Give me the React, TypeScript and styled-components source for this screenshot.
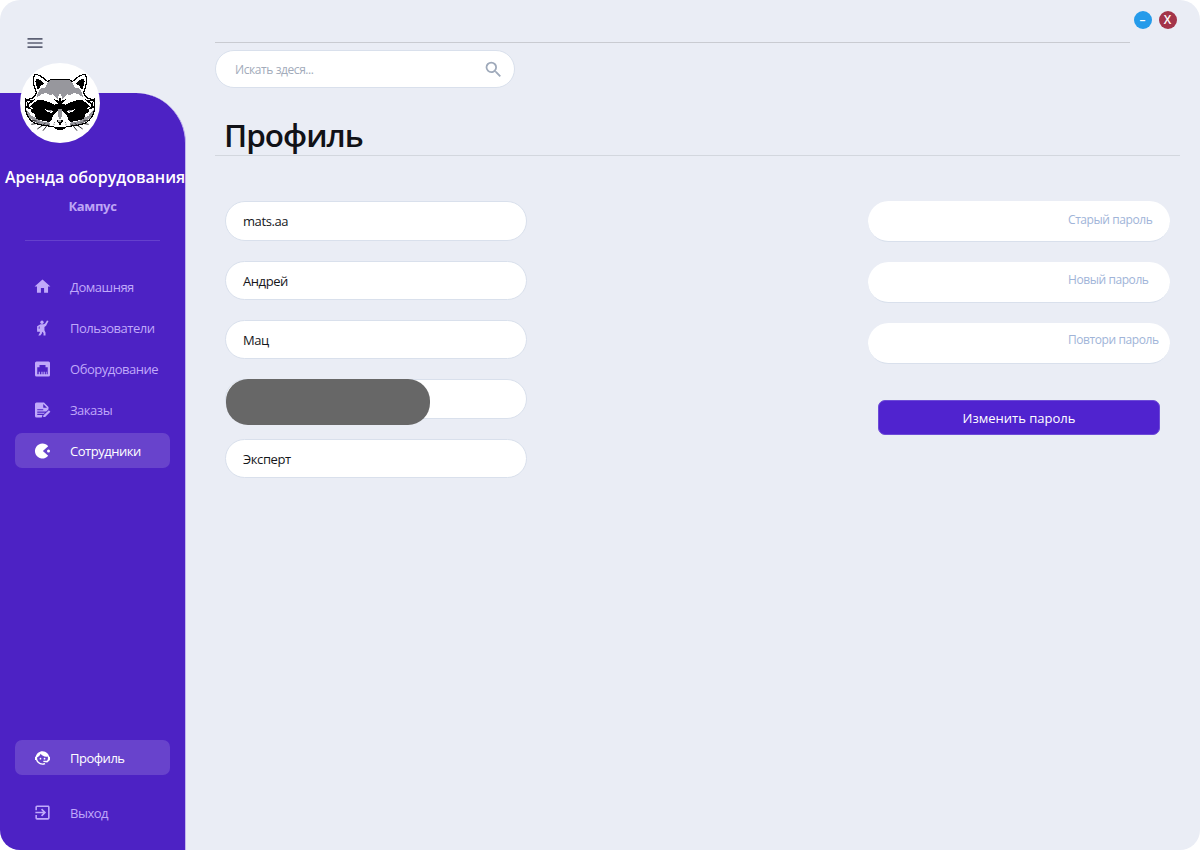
import React from 'react';
import styled, { createGlobalStyle } from 'styled-components';
import { MdHome, MdExitToApp, MdSearch, MdMenu } from 'react-icons/md';

const GlobalStyle = createGlobalStyle`
  * { box-sizing: border-box; }
  body { margin: 0; background: #fff; font-family: "Open Sans", "Noto Sans", sans-serif; }
  button, input { font-family: inherit; }
`;

const Window = styled.div`
  display: flex;
  width: 1200px;
  height: 850px;
  overflow: hidden;
  border-radius: 20px;
  background: #eaedf5;
`;

const Side = styled.aside`
  display: flex;
  flex-direction: column;
  width: 186px;
  padding-top: 33px;
`;

const MenuButton = styled.button`
  display: flex;
  width: 20px;
  height: 20px;
  margin-left: 25px;
  padding: 0;
  border: 0;
  background: none;
  color: #5c6074;
`;

const Panel = styled.nav`
  flex: 1;
  display: flex;
  flex-direction: column;
  margin-top: 40px;
  border-right: 1px solid #c2b5ee;
  border-top-right-radius: 50px;
  background: #4d22c4;
`;

const Avatar = styled.div`
  width: 80px;
  height: 80px;
  margin: -30px 0 0 20px;
  border-radius: 50%;
  overflow: hidden;
  background: #fff;
  flex: none;
  svg { display: block; }
`;

const Company = styled.div`
  margin: 23px 0 0 5px;
  height: 22px;
  line-height: 22px;
  font-size: 16px;
  font-weight: 600;
  white-space: nowrap;
  color: #fff;
`;

const Campus = styled.div`
  margin-top: 8px;
  height: 20px;
  line-height: 20px;
  font-size: 13px;
  font-weight: 700;
  letter-spacing: -0.35px;
  text-align: center;
  color: #bda5f5;
`;

const Divider = styled.div`
  height: 1px;
  margin: 24px 25px 28px;
  background: #6540cd;
`;

const NavList = styled.div`
  display: flex;
  flex-direction: column;
  gap: 6px;
  padding-left: 15px;
`;

const BottomNav = styled(NavList)`
  margin-top: auto;
  gap: 20px;
  padding-bottom: 20px;
`;

const NavItem = styled.a<{ $active?: boolean }>`
  display: flex;
  align-items: center;
  width: 155px;
  height: 35px;
  padding-left: 18px;
  gap: 18px;
  border-radius: 7px;
  font-size: 13px;
  white-space: nowrap;
  letter-spacing: -0.48px;
  color: ${p => (p.$active ? '#fff' : '#c0a9fa')};
  background: ${p => (p.$active ? '#6843cc' : 'transparent')};
  svg { flex: none; }
`;

const Main = styled.main`
  flex: 1;
  padding: 11px 20px 0 29px;
`;

const WindowButtons = styled.div`
  display: flex;
  justify-content: flex-end;
  gap: 7px;
  margin-right: 3.5px;
`;

const WindowButton = styled.button<{ $color: string }>`
  display: flex;
  align-items: center;
  justify-content: center;
  width: 18px;
  height: 18px;
  padding: 0;
  border: 0;
  border-radius: 50%;
  font-size: 12px;
  font-weight: 600;
  line-height: 18px;
  color: #fff;
  background: ${p => p.$color};
`;

const TopRule = styled.div`
  height: 1px;
  margin: 13px 50px 7px 0;
  background: #c9cbd1;
`;

const Search = styled.label`
  display: flex;
  align-items: center;
  width: 300px;
  height: 38px;
  padding: 0 10.5px 0 19px;
  border: 1px solid #d9e0ec;
  border-radius: 19px;
  background: #fff;
  color: #9ea9ba;
`;

const SearchInput = styled.input`
  flex: 1;
  min-width: 0;
  padding: 0;
  border: 0;
  outline: 0;
  background: none;
  font-size: 12px;
  letter-spacing: -0.42px;
  &::placeholder { color: #a2abba; opacity: 1; }
`;

const Title = styled.h1`
  margin: 21px 0 0;
  height: 47px;
  padding-left: 9px;
  border-bottom: 1px solid #d3d7de;
  line-height: 51px;
  font-size: 31.5px;
  font-weight: 600;
  letter-spacing: -1px;
  color: #111217;
`;

const Content = styled.div`
  display: flex;
  justify-content: space-between;
  padding: 45px 10px 0;
`;

const Fields = styled.div`
  display: flex;
  flex-direction: column;
  gap: 20px;
`;

const Field = styled.div<{ $height: number }>`
  position: relative;
  width: 302px;
  height: ${p => p.$height}px;
  padding-left: 17px;
  border: 1px solid #d9e0ec;
  border-radius: 20px;
  line-height: 39px;
  font-size: 13px;
  letter-spacing: -0.42px;
  color: #15161a;
  background: #fff;
`;

const Redaction = styled.div`
  position: absolute;
  left: 0;
  top: -1px;
  width: 204px;
  height: 46px;
  border-radius: 22px;
  background: #676767;
`;

const Passwords = styled.div`
  display: flex;
  flex-direction: column;
  gap: 20px;
  width: 302px;
`;

const Password = styled.div<{ $line: number }>`
  height: 41px;
  padding-left: 200px;
  border-bottom: 1px solid #d9e0ec;
  border-radius: 20.5px;
  line-height: ${p => p.$line}px;
  font-size: 12px;
  letter-spacing: -0.42px;
  white-space: nowrap;
  color: #a0b4d8;
  background: #fff;
`;

const Submit = styled.button`
  height: 35px;
  margin: 16px 10px 0;
  padding: 0;
  border: 1px solid #6d4bd7;
  border-radius: 7px;
  font-size: 13px;
  color: #fff;
  background: #5023cf;
`;

const Glyph = ({ children }: { children: React.ReactNode }) => (
  <svg width="19" height="18" viewBox="0 0 24 24" fill="currentColor">{children}</svg>
);

const PersonIcon = () => (
  <Glyph>
    <circle cx="11.3" cy="4.3" r="2.2" />
    <path d="M18 2l2 .8-3.2 6.2-2.2 1.6V15l1.4 3v4h-2.6v-3.5L11.5 17 11 19.5l-2 2.5H6.4L8.6 18l-.5-4V9.6L7 10.5V14H4.8V9.5L9.3 7h4.4l1.8-1z" />
    <path d="M4.8 13h4v4h-4z" />
  </Glyph>
);

const EthernetIcon = () => (
  <Glyph>
    <path fillRule="evenodd" d="M4 2h16a2 2 0 0 1 2 2v16a2 2 0 0 1-2 2H4a2 2 0 0 1-2-2V4a2 2 0 0 1 2-2zM5 19h2v-3.5h1.5V19h2v-3.5H12V19h1.5v-3.5H15V19h1.5v-3.5h1V19H19V9.5h-3V6.5H8v3H5z" />
  </Glyph>
);

const ContractIcon = () => (
  <Glyph>
    <path fillRule="evenodd" d="M4 2h10l6 6v3l-3 3H5v1.6h10.5L13.8 17H5v1.7h7L11 22H4a2 2 0 0 1-2-2V4a2 2 0 0 1 2-2zm9 2v5h5zM5 11v1.3h8V11z" />
    <path d="M20.5 12.2l2 2-7 7H13v-2z" />
  </Glyph>
);

const PacmanIcon = () => (
  <Glyph>
    <path d="M12 2c3 0 5.8 1.4 7.6 3.6L12.5 12l7.1 6.4A10 10 0 1 1 12 2z" />
    <circle cx="20" cy="12" r="2" />
  </Glyph>
);

const AgentIcon = () => (
  <Glyph>
    <path d="M18.72,14.76C19.07,13.91 19.26,13 19.26,12C19.26,11.28 19.15,10.59 18.96,9.95C18.31,10.1 17.63,10.18 16.92,10.18C13.86,10.18 11.15,8.67 9.5,6.34C8.61,8.5 6.91,10.26 4.77,11.22C4.73,11.47 4.73,11.74 4.73,12A7.27,7.27 0 0,0 12,19.27C13.05,19.27 14.06,19.04 14.97,18.63C15.54,19.72 15.8,20.26 15.78,20.26C14.14,20.81 12.87,21.08 12,21.08C9.58,21.08 7.27,20.13 5.57,18.42C4.53,17.38 3.76,16.11 3.33,14.73H2V10.18H3.09C3.93,6.04 7.6,2.92 12,2.92C14.4,2.92 16.71,3.87 18.42,5.58C19.69,6.84 20.54,8.45 20.89,10.18H22V14.73H21.94L18.38,18L13.08,17.4V15.73H17.91L18.72,14.76Z" />
    <circle cx="9.27" cy="12.9" r="1.14" />
    <circle cx="14.72" cy="12.9" r="1.14" />
  </Glyph>
);

/* One half of the face; the other half is its mirror image. */
const RaccoonHalf = () => (
  <g strokeLinejoin="round">
    <path d="M136 59H108L98 65C84 52 70 43 60 43C53 52 54 73 64 98C60 112 48 120 31 117C29 133 37 144 31 145C33 165 44 181 60 190L82 196L112 199L136 207" fill="#fff" stroke="#000" strokeWidth="3.5" />
    <path d="M136 60H108L97 69L91 83L75 86L68 101L66 111L82 102L92 98L105 105L114 103L122 113L128 118L132 103H136Z" fill="#97979d" />
    <path d="M63 55C58 68 66 79 68 90L80 75L90 72C82 63 72 56 63 55Z" fill="#000" />
    <path d="M33 150L46 158L62 173L80 184L104 188L106 197L82 194L60 187L42 172Z" fill="#97979d" />
    <path d="M32 118L47 121L62 117L53 127L43 131L40 138L50 149L39 146L31 143L37 136Z" fill="#000" />
    <path d="M37 124L46 124L40 129ZM36 149L49 158L61 172L49 167Z" fill="#fff" />
    <path d="M136 98L132 122L118 118L129 132L117 134L101 126L84 121L67 121L57 128L45 139L54 146L47 153L59 163L64 177L82 182L102 186L111 178L118 162L127 152H136Z" fill="#000" />
    <path d="M91 148L104 152L117 152L109 158L98 156Z" fill="#fff" />
    <path d="M98 150L115 152L106 156Z" fill="#888890" />
    <path d="M127 153L119 160L110 176L107 194L120 202L136 197V150Z" fill="#fff" />
    <path d="M136 148H129L128 160L132 178H136Z" fill="#97979d" />
    <path d="M136 179H128L125 184L131 191H136ZM136 191H133L134 198H136ZM118 204L136 200V210H127Z" fill="#000" />
    <path d="M65 183L45 181M91 190L67 207M99 193L84 212M73 189L49 193M117 187L119 188M116 193L118 194" fill="none" stroke="#000" strokeWidth="2.5" />
  </g>
);

const Raccoon = () => (
  <svg width="80" height="80" viewBox="15 9 240 240" shapeRendering="crispEdges">
    <RaccoonHalf />
    <g transform="translate(270 0) scale(-1 1)"><RaccoonHalf /></g>
    <path d="M130 181h8v4h-8z" fill="#aaa" />
  </svg>
);

export default function App() {
  return (
    <>
      <GlobalStyle />
      <Window>
        <Side>
          <MenuButton><MdMenu size={20} /></MenuButton>
          <Panel>
            <Avatar><Raccoon /></Avatar>
            <Company>Аренда оборудования</Company>
            <Campus>Кампус</Campus>
            <Divider />
            <NavList>
              <NavItem><MdHome size={19} />Домашняя</NavItem>
              <NavItem><PersonIcon />Пользователи</NavItem>
              <NavItem><EthernetIcon />Оборудование</NavItem>
              <NavItem><ContractIcon />Заказы</NavItem>
              <NavItem $active><PacmanIcon />Сотрудники</NavItem>
            </NavList>
            <BottomNav>
              <NavItem $active><AgentIcon />Профиль</NavItem>
              <NavItem><MdExitToApp size={19} />Выход</NavItem>
            </BottomNav>
          </Panel>
        </Side>
        <Main>
          <WindowButtons>
            <WindowButton $color="#259bea">–</WindowButton>
            <WindowButton $color="#a33449">X</WindowButton>
          </WindowButtons>
          <TopRule />
          <Search>
            <SearchInput placeholder="Искать здеся..." />
            <MdSearch size={21} />
          </Search>
          <Title>Профиль</Title>
          <Content>
            <Fields>
              <Field $height={40}>mats.aa</Field>
              <Field $height={39}>Андрей</Field>
              <Field $height={39}>Мац</Field>
              <Field $height={40}><Redaction /></Field>
              <Field $height={39}>Эксперт</Field>
            </Fields>
            <Passwords>
              <Password $line={38}>Старый пароль</Password>
              <Password $line={36}>Новый пароль</Password>
              <Password $line={34}>Повтори пароль</Password>
              <Submit>Изменить пароль</Submit>
            </Passwords>
          </Content>
        </Main>
      </Window>
    </>
  );
}
